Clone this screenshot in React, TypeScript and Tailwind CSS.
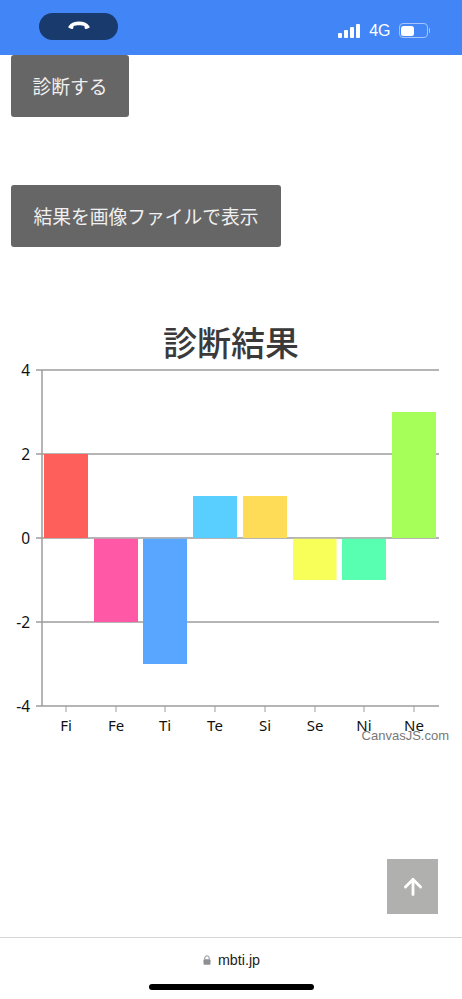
import { ArrowUp } from 'lucide-react';

const bars = [
  { label: 'Fi', x: 44, w: 44, value: 2, color: '#ff5f5a' },
  { label: 'Fe', x: 94, w: 44, value: -2, color: '#ff58a6' },
  { label: 'Ti', x: 143, w: 44, value: -3, color: '#58a6ff' },
  { label: 'Te', x: 193, w: 44, value: 1, color: '#58cfff' },
  { label: 'Si', x: 243, w: 44, value: 1, color: '#ffdc58' },
  { label: 'Se', x: 293, w: 43.5, value: -1, color: '#f8ff58' },
  { label: 'Ni', x: 342, w: 44, value: -1, color: '#58ffb0' },
  { label: 'Ne', x: 392, w: 44, value: 3, color: '#a6ff58' },
];

const UNIT = 42;
const ZERO = 178; // y of the 0 line inside the chart svg
const TOP = ZERO - 4 * UNIT;
const BOTTOM = ZERO + 4 * UNIT;

function Chart() {
  return (
    <svg width="462" height="390" viewBox="0 0 462 390" className="block">
      {[4, 2, 0, -2, -4].map((v) => {
        const y = ZERO - v * UNIT;
        return (
          <g key={v}>
            <line x1="36" x2="439" y1={y} y2={y} stroke="#9c9c9c" strokeWidth="1.5" />
            <text x="30" y={y + 5.5} textAnchor="end" fontSize="15.5" fill="#111" fontFamily="'Noto Sans', sans-serif">
              {v}
            </text>
          </g>
        );
      })}
      <line x1="42" x2="42" y1={TOP} y2={BOTTOM} stroke="#9c9c9c" strokeWidth="1.5" />
      {bars.map((b) => (
        <rect
          key={b.label}
          x={b.x}
          y={b.value > 0 ? ZERO - b.value * UNIT : ZERO + 0.75}
          width={b.w}
          height={Math.abs(b.value) * UNIT - (b.value > 0 ? 0 : 0.75)}
          fill={b.color}
        />
      ))}
      {bars.map((b) => {
        const cx = Math.round(b.x + b.w / 2);
        return (
          <g key={b.label}>
            <line x1={cx} x2={cx} y1={BOTTOM} y2={BOTTOM + 6} stroke="#9c9c9c" strokeWidth="1" />
            <text x={cx} y={BOTTOM + 25} textAnchor="middle" fontSize="15" fill="#111" fontFamily="'Noto Sans', sans-serif">
              {b.label}
            </text>
          </g>
        );
      })}
      <text x="449" y={BOTTOM + 34} textAnchor="end" fontSize="13" fill="#777" fontFamily="'Liberation Sans', sans-serif">
        CanvasJS.com
      </text>
    </svg>
  );
}

const buttonClass = 'block h-[62px] rounded-[3px] bg-[#666666] text-center text-[18.75px] text-[#f0f0f0]';

export default function App() {
  return (
    <div className="relative flex h-[999px] w-[462px] flex-col overflow-hidden bg-white font-['Noto_Sans_CJK_JP','Noto_Sans',sans-serif]">
      {/* iOS status bar */}
      <header className="flex h-[55px] shrink-0 items-center justify-between bg-[#4285f6] pl-[39px] pr-[32px]">
        <div className="mb-[2px] flex h-[27px] w-[79px] items-center justify-center rounded-full bg-[#183a6d]">
          <svg width="22" height="9" viewBox="0 0 22 9" className="mb-[2px]">
            <path
              d="M.6 5.2C2.8 1.8 6.8.4 11 .4s8.200 1.400 10.400 4.800c.4.700.2 1.500-.5 1.800l-2.600 1c-.7.200-1.300-.1-1.500-.8l-.5-2.200c-1.400-.5-3-.7-5.300-.7s-3.900.2-5.300.7l-.5 2.200c-.2.700-.8 1-1.500.8l-2.600-1C.4 6.700.2 5.900.6 5.200z"
              fill="#ffffff"
            />
          </svg>
        </div>
        <div className="mt-[6px] flex items-center">
          <div className="flex items-end gap-[2px]">
            <span className="h-[5px] w-[4px] rounded-[1px] bg-white" />
            <span className="h-[8px] w-[4px] rounded-[1px] bg-white" />
            <span className="h-[11px] w-[4px] rounded-[1px] bg-white" />
            <span className="h-[14px] w-[4px] rounded-[1px] bg-white" />
          </div>
          <span className="ml-[9px] font-['Liberation_Sans',sans-serif] text-[16px] leading-none text-white">4G</span>
          <div className="ml-[8px] flex h-[15px] w-[29px] items-center rounded-[4px] border border-[#a5c4fa] p-[1.5px]">
            <span className="h-full w-[13px] rounded-[2.5px] bg-white" />
          </div>
          <span className="ml-px h-[5px] w-[1.5px] rounded-r-full bg-[#a5c4fa]" />
        </div>
      </header>

      <main className="flex-1 pl-[11px]">
        <button className={`${buttonClass} w-[118px]`}>診断する</button>
        <button className={`${buttonClass} mt-[68px] w-[270px]`}>結果を画像ファイルで表示</button>
        <h1 className="-ml-[11px] mt-[72px] h-[41px] text-center text-[34px] font-medium leading-[46px] text-[#3a3a3a]">
          診断結果
        </h1>
        <div className="-ml-[11px]">
          <Chart />
        </div>
      </main>

      {/* scroll to top */}
      <div className="absolute left-[387px] top-[859px] flex h-[55px] w-[51px] items-center justify-center bg-[#b0b0ae]">
        <ArrowUp size={26} strokeWidth={2.6} color="#ffffff" />
      </div>

      {/* Safari address bar */}
      <footer className="relative h-[62px] shrink-0 border-t border-[#d6d6d6] bg-white">
        <div className="mt-[12px] flex items-center justify-center gap-[7px] pl-[1px]">
          <svg width="8" height="10" viewBox="0 0 8 10">
            <path d="M1.8 4.5V3a2.200 2.200 0 0 1 4.400 0v1.500" fill="none" stroke="#8e8e93" strokeWidth="1" />
            <rect x="0.5" y="4.2" width="7" height="5.5" rx="1" fill="#8e8e93" />
          </svg>
          <span className="font-['Liberation_Sans',sans-serif] text-[14.3px] leading-[20px] text-[#222222]">mbti.jp</span>
        </div>
        <div className="absolute left-[149px] top-[46px] h-[6px] w-[165px] rounded-full bg-black" />
      </footer>
    </div>
  );
}
